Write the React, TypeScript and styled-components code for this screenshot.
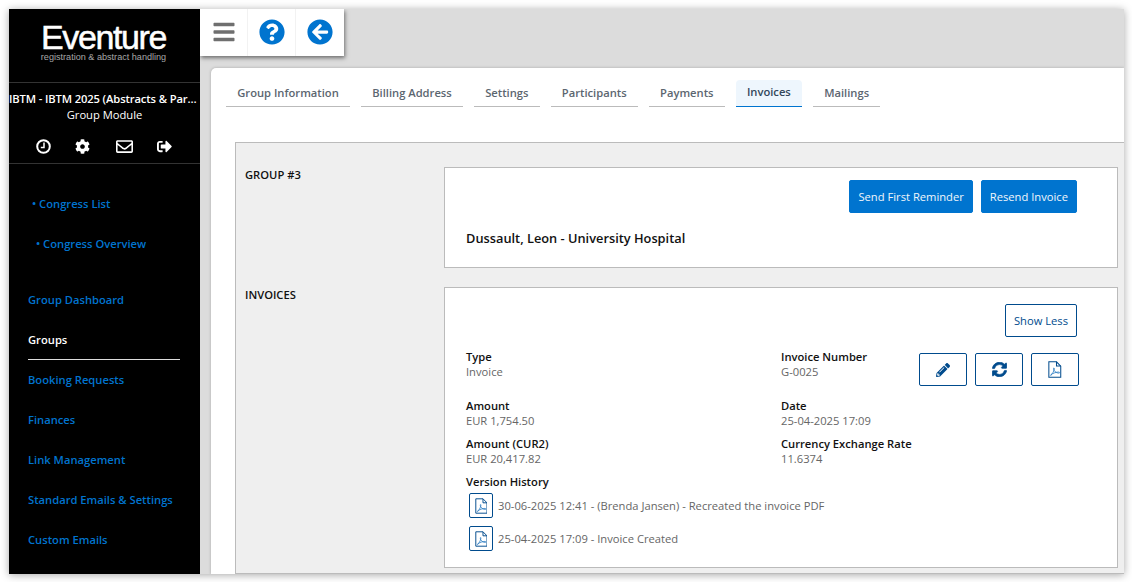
import React from 'react';
import styled, { createGlobalStyle } from 'styled-components';
import {
  FaArrowCircleLeft,
  FaBars,
  FaCog,
  FaPencilAlt,
  FaQuestionCircle,
  FaRegEnvelope,
  FaSignOutAlt,
  FaSyncAlt,
} from 'react-icons/fa';

const blue = '#0074cf';
const navy = '#004b8d';

const GlobalStyle = createGlobalStyle`
  html, body {
    margin: 0;
    height: 100%;
    overflow: hidden;
    background: #fff;
  }
  body {
    font-family: 'Open Sans', 'Liberation Sans', sans-serif;
  }
  * { box-sizing: border-box; }
`;

const Frame = styled.div`
  display: flex;
  width: 1115px;
  height: 565px;
  margin: 9px 0 0 9px;
  overflow: hidden;
  box-shadow: 0 1px 8px rgba(0, 0, 0, 0.35);
`;

const Sidebar = styled.aside`
  width: 191px;
  flex: none;
  background: #000;
  color: #fff;
  display: flex;
  flex-direction: column;
`;

const Logo = styled.div`
  height: 74px;
  border-bottom: 1px solid #333;
  display: flex;
  flex-direction: column;
  align-items: center;
  padding: 13px 2px 0 0;
`;

const LogoName = styled.div`
  font-family: 'Liberation Sans', sans-serif;
  font-size: 34px;
  line-height: 31px;
  letter-spacing: -1.4px;
  -webkit-text-stroke: 0.5px #fff;
`;

const LogoTag = styled.div`
  font-family: 'Liberation Sans', sans-serif;
  font-size: 9.1px;
  line-height: 9px;
  color: #a8a8a8;
`;

const Congress = styled.div`
  padding-top: 8px;
  height: 81px;
  border-bottom: 1px solid #333;
  text-align: center;
  font-size: 11.2px;
`;

const CongressName = styled.div`
  font-weight: 600;
  line-height: 16px;
  letter-spacing: -0.12px;
  white-space: nowrap;
  overflow: hidden;
  text-overflow: ellipsis;
`;

const CongressModule = styled.div`
  line-height: 16px;
`;

const QuickIcons = styled.div`
  display: flex;
  justify-content: space-between;
  align-items: center;
  padding: 0 28px 0 27px;
  margin-top: 15px;
  font-size: 15px;
  height: 16px;
`;

const MailIcon = styled(FaRegEnvelope)`
  font-size: 17px;
  margin-left: 1px;
`;

const SubNav = styled.nav`
  display: flex;
  flex-direction: column;
  padding-top: 20px;
`;

const SubLink = styled.a<{ $indent: number }>`
  height: 40px;
  line-height: 40px;
  padding-left: ${(p) => p.$indent}px;
  font-size: 11.2px;
  font-weight: 600;
  color: ${blue};
`;

const MainNav = styled.nav`
  display: flex;
  flex-direction: column;
  margin-top: 16px;
`;

const NavLink = styled.a<{ $active?: boolean }>`
  height: 40px;
  line-height: 40px;
  margin: 0 20px 0 19px;
  font-size: 11.2px;
  font-weight: 600;
  color: ${(p) => (p.$active ? '#fff' : blue)};
  border-bottom: 1px solid ${(p) => (p.$active ? '#ddd' : 'transparent')};
`;

const Main = styled.main`
  flex: 1;
  min-width: 0;
  background: #dcdcdc;
  display: flex;
  flex-direction: column;
`;

const Toolbar = styled.div`
  display: flex;
  align-self: flex-start;
  height: 47px;
  background: #fff;
  box-shadow: 1px 2px 4px rgba(0, 0, 0, 0.5);
`;

const ToolButton = styled.button<{ $color: string; $size: number }>`
  width: 48px;
  padding: 0 0 1px;
  border: 0;
  border-right: 1px solid #f2f2f2;
  background: #fff;
  color: ${(p) => p.$color};
  font-size: ${(p) => p.$size}px;
  display: flex;
  align-items: center;
  justify-content: center;
  &:last-child { border-right: 0; }
`;

const Card = styled.section`
  flex: 1;
  min-height: 0;
  margin: 12px 0 0 11px;
  background: #fff;
  border-top-left-radius: 5px;
  box-shadow: 0 0 3px rgba(0, 0, 0, 0.25);
  padding-left: 15px;
  display: flex;
  flex-direction: column;
`;

const Tabs = styled.div`
  display: flex;
  gap: 11px;
  height: 74px;
  padding-top: 12px;
`;

const Tab = styled.a<{ $active?: boolean }>`
  height: 27px;
  padding: 0 11.2px;
  line-height: ${(p) => (p.$active ? '24px' : '26px')};
  font-size: 11.2px;
  font-weight: 600;
  color: ${(p) => (p.$active ? '#33475b' : '#5c6670')};
  border-bottom: 1px solid ${(p) => (p.$active ? blue : '#bbb')};
  background: ${(p) => (p.$active ? '#eef6fd' : 'transparent')};
  border-radius: ${(p) => (p.$active ? '4px 4px 0 0' : '0')};
`;

const Panel = styled.div`
  flex: 1;
  min-height: 0;
  margin-left: 9px;
  background: #efefef;
  border: 1px solid #bbb;
  border-right: 0;
  padding: 24px 6px 0 9px;
  display: flex;
  flex-direction: column;
  gap: 19px;
`;

const Row = styled.div`
  display: flex;
  flex: none;
`;

const RowLabel = styled.div`
  width: 199px;
  flex: none;
  font-size: 11.2px;
  font-weight: 600;
  line-height: 16px;
  color: #111;
`;

const Box = styled.div<{ $height: number; $top: number }>`
  flex: 1;
  height: ${(p) => p.$height}px;
  background: #fff;
  border: 1px solid #bbb;
  padding: ${(p) => p.$top}px 40px 0 21px;
`;

const ButtonRow = styled.div`
  display: flex;
  justify-content: flex-end;
  gap: 8px;
`;

const Button = styled.button<{ $outline?: boolean }>`
  height: 33px;
  padding: 0 8px;
  font-family: inherit;
  font-size: 11.2px;
  border-radius: 2px;
  border: 1px solid ${(p) => (p.$outline ? navy : blue)};
  background: ${(p) => (p.$outline ? '#fff' : blue)};
  color: ${(p) => (p.$outline ? navy : '#f1f6fb')};
`;

const Person = styled.div`
  margin-top: 16px;
  font-size: 12.8px;
  font-weight: 600;
  line-height: 18px;
  color: #111;
`;

const Fields = styled.div`
  display: grid;
  grid-template-columns: 315px 1fr;
  margin-top: 12px;
`;

const Field = styled.div<{ $height: number }>`
  height: ${(p) => p.$height}px;
`;

const FieldWithActions = styled(Field)`
  display: flex;
  justify-content: space-between;
  margin-right: -2px;
`;

const FieldLabel = styled.div`
  font-size: 11.2px;
  font-weight: 600;
  line-height: 15px;
  color: #111;
`;

const FieldValue = styled.div`
  font-size: 11.2px;
  line-height: 15px;
  color: #666;
`;

const Actions = styled.div`
  display: flex;
  gap: 8px;
  margin-top: 4px;
`;

const IconButton = styled.button`
  width: 48px;
  height: 33px;
  padding: 0;
  background: #fff;
  border: 1px solid ${navy};
  border-radius: 2px;
  color: ${navy};
  font-size: 14px;
  display: flex;
  align-items: center;
  justify-content: center;
`;

const RefreshIcon = styled(FaSyncAlt)`
  font-size: 15px;
  stroke: currentColor;
  stroke-width: 24;
`;

const History = styled.div`
  display: flex;
  align-items: center;
  gap: 5px;
  height: 33px;
  padding-left: 3px;
  font-size: 11.2px;
  color: #666;
`;

const HistoryIcon = styled.span`
  width: 24px;
  height: 25px;
  border: 1px solid ${navy};
  border-radius: 2px;
  color: ${navy};
  display: flex;
  align-items: center;
  justify-content: center;
`;

// the old font-awesome clock, react-icons only has the newer one
const ClockIcon = () => (
  <svg width="15" height="15" viewBox="0 0 15 15" fill="none" stroke="currentColor">
    <circle cx="7.5" cy="7.5" r="6.3" strokeWidth="2" />
    <path d="M8 3.6V8.4H4.8" strokeWidth="1.5" />
  </svg>
);

const PdfIcon = ({ size }: { size: number }) => (
  <svg width={size * 0.8} height={size} viewBox="0 0 16 20" fill="none" stroke="currentColor" strokeWidth="1.2">
    <path d="M1 1H10L15 6V19H1Z" />
    <path d="M10 1V6H15" />
    <path d="M3 16.5C5 15.5 6.8 12.5 7.3 9.5C7.6 7.8 6.6 7.6 6.6 9C6.6 11.5 9.5 14.5 13 14.3C14 14.2 13.8 13 12.5 13C9.5 13 5.5 14.5 3.6 16.2C2.8 17 3.4 17.4 3.9 16.9" strokeWidth="1" stroke="#2f7fc4" />
  </svg>
);

const tabs = ['Group Information', 'Billing Address', 'Settings', 'Participants', 'Payments', 'Invoices', 'Mailings'];
const links = ['Group Dashboard', 'Groups', 'Booking Requests', 'Finances', 'Link Management', 'Standard Emails & Settings', 'Custom Emails'];
const versions = [
  '30-06-2025 12:41 - (Brenda Jansen) - Recreated the invoice PDF',
  '25-04-2025 17:09 - Invoice Created',
];

const App = () => {
  return (
    <Frame>
      <GlobalStyle />
      <Sidebar>
        <Logo>
          <LogoName>Eventure</LogoName>
          <LogoTag>registration &amp; abstract handling</LogoTag>
        </Logo>
        <Congress>
          <CongressName>IBTM - IBTM 2025 (Abstracts &amp; Participants)</CongressName>
          <CongressModule>Group Module</CongressModule>
          <QuickIcons>
            <ClockIcon />
            <FaCog />
            <MailIcon />
            <FaSignOutAlt />
          </QuickIcons>
        </Congress>
        <SubNav>
          <SubLink $indent={23}>• Congress List</SubLink>
          <SubLink $indent={27}>• Congress Overview</SubLink>
        </SubNav>
        <MainNav>
          {links.map((link) => (
            <NavLink key={link} $active={link === 'Groups'}>
              {link}
            </NavLink>
          ))}
        </MainNav>
      </Sidebar>
      <Main>
        <Toolbar>
          <ToolButton $color="#6f6f6f" $size={24}>
            <FaBars />
          </ToolButton>
          <ToolButton $color={blue} $size={26}>
            <FaQuestionCircle />
          </ToolButton>
          <ToolButton $color={blue} $size={26}>
            <FaArrowCircleLeft />
          </ToolButton>
        </Toolbar>
        <Card>
          <Tabs>
            {tabs.map((tab) => (
              <Tab key={tab} $active={tab === 'Invoices'}>
                {tab}
              </Tab>
            ))}
          </Tabs>
          <Panel>
            <Row>
              <RowLabel>GROUP #3</RowLabel>
              <Box $height={101} $top={12}>
                <ButtonRow>
                  <Button>Send First Reminder</Button>
                  <Button>Resend Invoice</Button>
                </ButtonRow>
                <Person>Dussault, Leon - University Hospital</Person>
              </Box>
            </Row>
            <Row>
              <RowLabel>INVOICES</RowLabel>
              <Box $height={281} $top={16}>
                <ButtonRow>
                  <Button $outline>Show Less</Button>
                </ButtonRow>
                <Fields>
                  <Field $height={49}>
                    <FieldLabel>Type</FieldLabel>
                    <FieldValue>Invoice</FieldValue>
                  </Field>
                  <FieldWithActions $height={49}>
                    <div>
                      <FieldLabel>Invoice Number</FieldLabel>
                      <FieldValue>G-0025</FieldValue>
                    </div>
                    <Actions>
                      <IconButton><FaPencilAlt /></IconButton>
                      <IconButton><RefreshIcon /></IconButton>
                      <IconButton><PdfIcon size={17} /></IconButton>
                    </Actions>
                  </FieldWithActions>
                  <Field $height={38}>
                    <FieldLabel>Amount</FieldLabel>
                    <FieldValue>EUR 1,754.50</FieldValue>
                  </Field>
                  <Field $height={38}>
                    <FieldLabel>Date</FieldLabel>
                    <FieldValue>25-04-2025 17:09</FieldValue>
                  </Field>
                  <Field $height={38}>
                    <FieldLabel>Amount (CUR2)</FieldLabel>
                    <FieldValue>EUR 20,417.82</FieldValue>
                  </Field>
                  <Field $height={38}>
                    <FieldLabel>Currency Exchange Rate</FieldLabel>
                    <FieldValue>11.6374</FieldValue>
                  </Field>
                </Fields>
                <FieldLabel>Version History</FieldLabel>
                {versions.map((version) => (
                  <History key={version}>
                    <HistoryIcon><PdfIcon size={16} /></HistoryIcon>
                    {version}
                  </History>
                ))}
              </Box>
            </Row>
          </Panel>
        </Card>
      </Main>
    </Frame>
  );
};

export default App;
